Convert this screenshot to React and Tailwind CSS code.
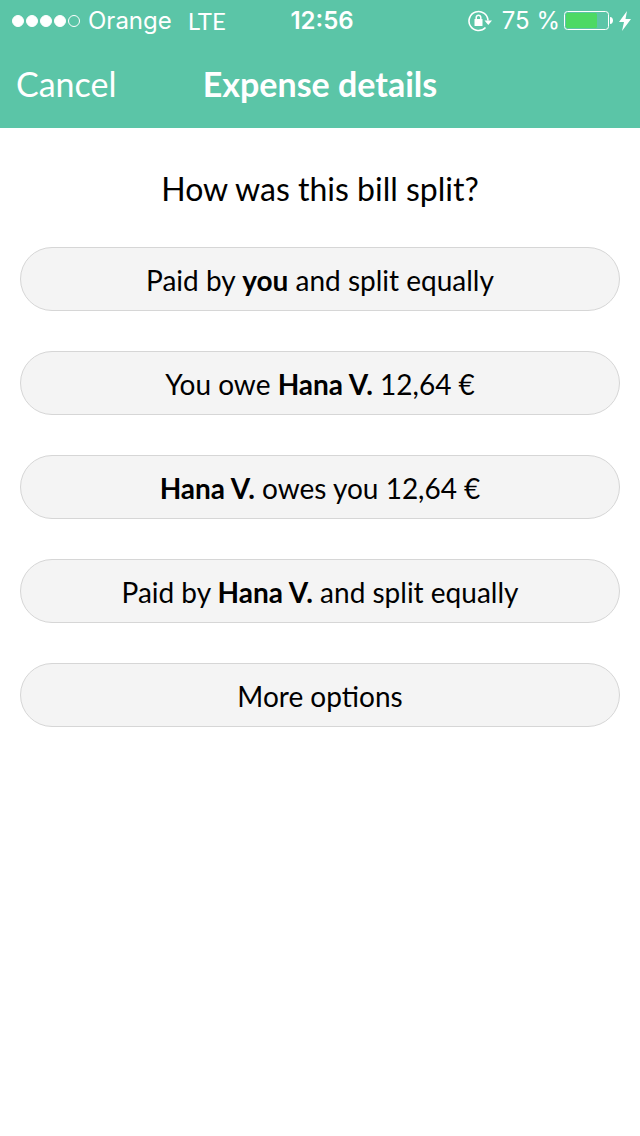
import clsx from 'clsx';

const splitOptions = [
  { id: 'you-equal', label: <>Paid by <b>you</b> and split equally</> },
  { id: 'you-owe', label: <>You owe <b>Hana V.</b> 12,64 €</> },
  { id: 'they-owe', label: <><b>Hana V.</b> owes you 12,64 €</> },
  { id: 'they-equal', label: <>Paid by <b>Hana V.</b> and split equally</> },
  { id: 'more', label: 'More options' },
];

const App = () => {
  return (
    <div className="min-h-screen bg-white font-['Lato',sans-serif] text-black">
      <header className="bg-[#5bc5a7] text-white">
        <StatusBar />
        <div className="grid h-22 grid-cols-[1fr_auto_1fr] items-center px-4 pb-[2px]">
          <button type="button" className="justify-self-start text-[34px]">Cancel</button>
          <h1 className="text-[34px] font-bold">Expense details</h1>
        </div>
      </header>

      <main className="px-5 pt-[41px]">
        <h2 className="text-center text-[32px] leading-[40px]">How was this bill split?</h2>
        <div className="mt-[38px] flex flex-col gap-10">
          {splitOptions.map((option) => (
            <button
              key={option.id}
              type="button"
              className="h-16 rounded-full border border-[#d6d6d6] bg-[#f4f4f4] pt-[2px] text-[28px]"
            >
              {option.label}
            </button>
          ))}
        </div>
      </main>
    </div>
  );
};

const StatusBar = () => {
  return (
    <div className="grid h-10 grid-cols-[1fr_auto_1fr] items-center pt-[2px] pr-2 pl-3 font-['Inter',sans-serif] text-2xl">
      <div className="flex items-center gap-2">
        <div className="flex gap-[2px]">
          {[1, 2, 3, 4, 5].map((dot) => (
            <span
              key={dot}
              className={clsx('size-3 rounded-full border border-white', dot < 5 && 'bg-white')}
            ></span>
          ))}
        </div>
        <span>Orange</span>
        <span className="ml-2 font-['Lato',sans-serif]">LTE</span>
      </div>
      <span className="font-semibold">12:56</span>
      <div className="flex items-center justify-end gap-1">
        <RotationLockIcon />
        <span className="ml-1">75 %</span>
        <BatteryIcon />
        <BoltIcon />
      </div>
    </div>
  );
};

const RotationLockIcon = () => (
  <svg width="26" height="22" viewBox="0 0 26 22" fill="none" stroke="white">
    <path d="M17.500 17.500A9.500 9.500 0 1 1 20 10.500" strokeWidth="1.600" />
    <path d="M16.500 10.500h7.500l-3.750 4.500z" fill="white" stroke="none" />
    <rect x="6.500" y="9" width="8" height="7" rx="0.500" fill="white" stroke="none" />
    <path d="M8.200 9.500V7.500a2.300 2.300 0 0 1 4.600 0v2" strokeWidth="1.500" />
  </svg>
);

const BatteryIcon = () => (
  <svg width="50" height="20" viewBox="0 0 50 20">
    <rect x="0.500" y="0.500" width="44" height="18" rx="3" fill="none" stroke="white" />
    <rect x="2" y="2" width="31" height="15" rx="1.500" fill="#4cd964" />
    <path d="M46 6c4 0 4 7 0 7z" fill="white" />
  </svg>
);

const BoltIcon = () => (
  <svg width="14" height="20" viewBox="0 0 14 20" fill="white">
    <path d="M9 0 1 11h5L4 20l9-12H7.500z" />
  </svg>
);

export default App;
